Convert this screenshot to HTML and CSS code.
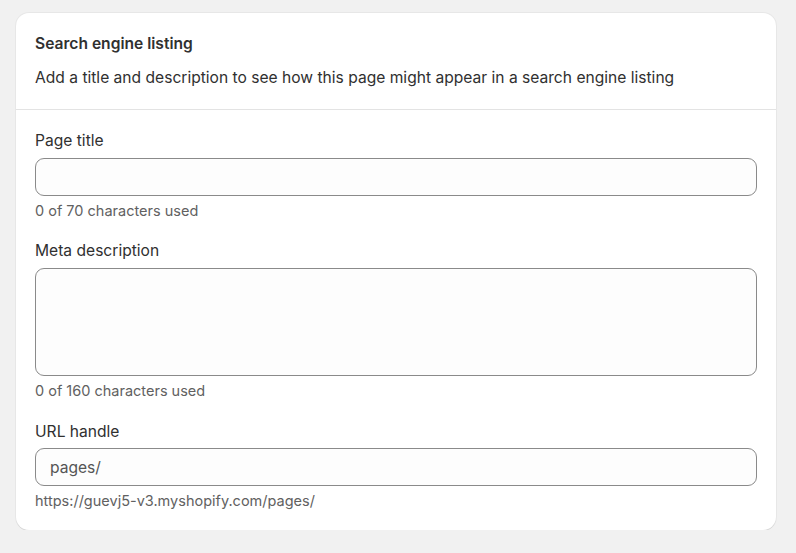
FILE: index.html
```html
<!DOCTYPE html>
<html lang="en">
<head>
<meta charset="utf-8">
<title>Search engine listing</title>
<link rel="stylesheet" href="styles.css">
</head>
<body>
<div class="page">
  <section class="card">
    <header class="card-header">
      <h2 class="card-title">Search engine listing</h2>
      <p class="card-desc">Add a title and description to see how this page might appear in a search engine listing</p>
    </header>
    <div class="card-body">
      <div class="field">
        <label class="label">Page title</label>
        <div class="input"></div>
        <div class="help">0 of 70 characters used</div>
      </div>
      <div class="field">
        <label class="label">Meta description</label>
        <div class="input textarea"></div>
        <div class="help">0 of 160 characters used</div>
      </div>
      <div class="field">
        <label class="label">URL handle</label>
        <div class="input"><span class="prefix">pages/</span></div>
        <div class="help">https://guevj5-v3.myshopify.com/pages/</div>
      </div>
    </div>
  </section>
</div>
</body>
</html>
```

FILE: styles.css
```css
html, body {
  margin: 0;
  padding: 0;
  background: #f1f1f1;
  font-family: Inter, "Noto Sans", sans-serif;
  color: #303030;
}
.page {
  padding: 13px 20px 0 16px;
}
.card {
  background: #fff;
  border-radius: 13px;
  box-shadow: 0 1px 0 rgba(0,0,0,0.07), 0 0 0 1px rgba(0,0,0,0.04);
  width: 760px;
}
.card-header {
  padding: 22px 19px 21px;
  border-bottom: 1px solid #e3e3e3;
}
.card-title {
  margin: 0;
  font-size: 15.6px;
  font-weight: 600;
  line-height: 18px;
  color: #303030;
}
.card-desc {
  margin: 15px 0 0;
  font-size: 15.6px;
  line-height: 20px;
  color: #303030;
}
.card-body {
  padding: 21px 19px 19.5px;
  display: flex;
  flex-direction: column;
  gap: 21.5px;
}
.field {
  display: flex;
  flex-direction: column;
}
.label {
  font-size: 15.6px;
  line-height: 20px;
  margin-bottom: 6.8px;
  color: #303030;
}
.input {
  height: 36px;
  border: 1px solid #8a8a8a;
  border-radius: 9px;
  background: #fdfdfd;
  display: flex;
  align-items: center;
  padding: 0 14px;
}
.textarea {
  height: 106px;
}
.prefix {
  font-size: 15.6px;
  color: #555555;
}
.help {
  margin-top: 6px;
  font-size: 14.5px;
  line-height: 18px;
  color: #616161;
}
```
